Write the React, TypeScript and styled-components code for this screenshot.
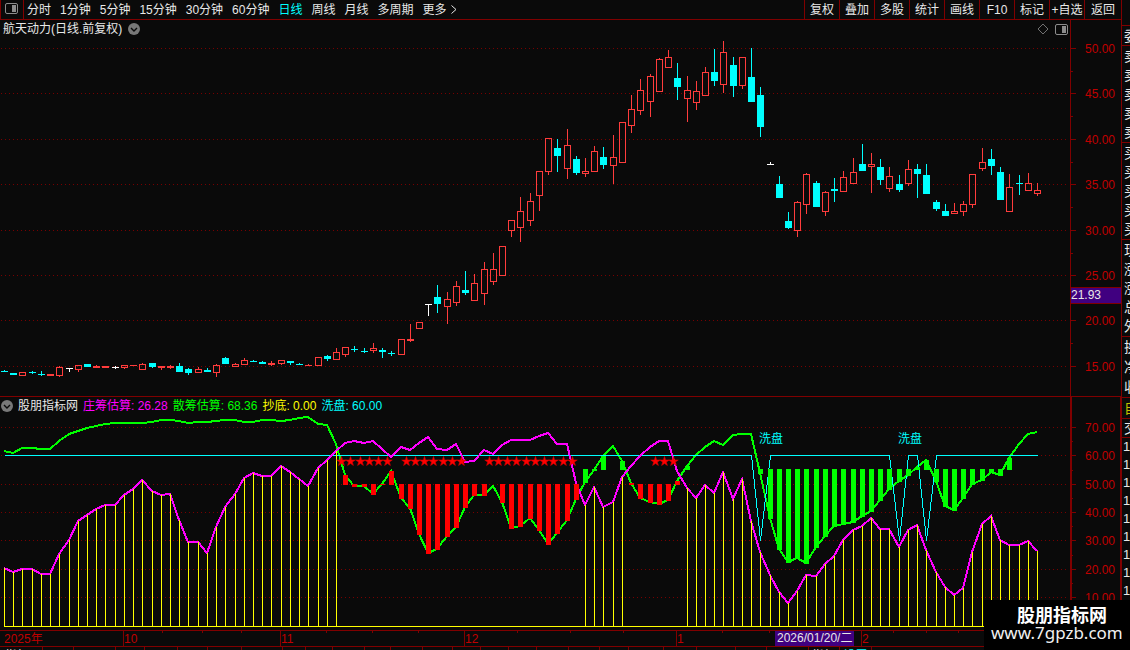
import React from "react";
import styled, { createGlobalStyle } from "styled-components";

const FRAME = "#800000";
const AXIS_TEXT = "#c00000";
const RISE = "#ff3c3c";
const FALL = "#00ffff";

const GlobalStyle = createGlobalStyle`
  * { box-sizing: border-box; }
  body { margin: 0; background: #0a0a0a; }
  body, button {
    font-family: "Liberation Sans", "Noto Sans CJK SC", sans-serif;
    font-size: 12px;
    line-height: 16px;
  }
`;

const Page = styled.div`
  position: relative;
  display: grid;
  grid-template-columns: minmax(0, 1fr) 9px;
  height: 100vh;
  overflow: hidden;
  color: #e8e8e8;
  background: #0a0a0a;
`;

const Main = styled.main`
  display: flex;
  flex-direction: column;
  min-width: 0;
`;

const Toolbar = styled.nav`
  display: flex;
  align-items: stretch;
  height: 20px;
  border-bottom: 1px solid ${FRAME};
`;

const LayoutButton = styled.button`
  display: flex;
  align-items: center;
  justify-content: center;
  width: 24px;
  padding: 0 2px 2px 0;
  background: none;
  border: solid ${FRAME};
  border-width: 0 1px;
`;

const Periods = styled.div`
  display: flex;
  flex: 1;
  align-items: center;
  gap: 9px;
  padding-left: 3px;
  min-width: 0;
`;

const PeriodButton = styled.button<{ $active?: boolean }>`
  display: flex;
  align-items: center;
  gap: 4px;
  padding: 0;
  border: 0;
  background: none;
  white-space: nowrap;
  color: ${(p) => (p.$active ? FALL : "#e8e8e8")};
`;

const ActionButton = styled.button<{ $width: number }>`
  width: ${(p) => p.$width}px;
  padding: 0;
  border: 0;
  border-left: 1px solid ${FRAME};
  background: none;
  color: #e8e8e8;
  text-align: center;
  white-space: nowrap;
`;

const TitleRow = styled.header`
  display: flex;
  height: 20px;
`;

const TitleArea = styled.div`
  display: flex;
  flex: 1;
  align-items: center;
  gap: 6px;
  padding: 0 2px 2px 3px;
`;

const Title = styled.h1`
  margin: 0;
  font-size: 12px;
  font-weight: 400;
`;

const IconButton = styled.button<{ $push?: boolean }>`
  display: flex;
  padding: 0;
  border: 0;
  background: none;
  margin-left: ${(p) => (p.$push ? "auto" : "0")};
`;

const AxisGutter = styled.div<{ $weight: number }>`
  width: 51px;
  border: solid ${FRAME};
  border-width: 0 ${(p) => p.$weight - 1}px 0 ${(p) => p.$weight}px;
`;

const LegendRow = styled.div`
  display: flex;
  height: 19px;
  border-top: 1px solid ${FRAME};
`;

const LegendArea = styled.div`
  display: flex;
  flex: 1;
  align-items: center;
  gap: 5px;
  padding: 0 1px 1px;
`;

const LegendItem = styled.span<{ $color: string }>`
  color: ${(p) => p.$color};
  white-space: nowrap;
`;

const Plot = styled.svg`
  display: block;
  width: 100%;
  height: auto;
  flex: none;
  font-family: "Liberation Sans", "Noto Sans CJK SC", sans-serif;
  font-size: 12px;
`;

const Tabs = styled.div`
  display: flex;
  flex: none;
  height: 18px;
  overflow: hidden;
`;

const Tab = styled.button<{ $width: number; $lit?: boolean }>`
  flex: none;
  width: ${(p) => p.$width}px;
  padding: 0;
  border: 0;
  border-right: 1px solid ${FRAME};
  background: none;
  color: ${(p) => (p.$lit ? FALL : "#e8e8e8")};
  white-space: nowrap;
`;

const Side = styled.aside`
  display: flex;
  flex-direction: column;
  overflow: hidden;
  border-left: 1px solid ${FRAME};
  font-size: 14px;
`;

const SideGroup = styled.div<{ $height: number; $color?: string }>`
  display: flex;
  flex: none;
  flex-direction: column;
  justify-content: space-around;
  height: ${(p) => p.$height}px;
  padding-left: 2px;
  border-bottom: 1px solid ${FRAME};
  color: ${(p) => p.$color || "#e8e8e8"};
  white-space: nowrap;
`;

const Ticks = styled.div`
  display: flex;
  flex-direction: column;
  font-size: 13px;
  line-height: 18px;
  padding-left: 1px;
`;

const Watermark = styled.footer`
  position: absolute;
  right: 0;
  bottom: 0;
  width: 146px;
  height: 50px;
  padding: 4px 0 0 7px;
  background: #000;
  color: #fff;
`;

const SiteName = styled.div`
  padding-left: 3px;
  text-align: center;
  font: 700 18px/20px "Noto Sans CJK SC", sans-serif;
`;

const SiteLink = styled.a`
  display: block;
  font: 400 17px/18px "Noto Sans", sans-serif;
  color: #f0f0f0;
  text-decoration: none;
`;

type Candle = [kind: "r" | "c" | "w", high: number, top: number, bottom: number, low: number];

const candles: Candle[] = [
  ["c", 370, 371, 372, 372], ["c", 373, 373, 375, 375], ["r", 372, 372, 376, 376], ["c", 371, 372, 373, 374],
  ["c", 371, 374, 375, 376], ["r", 374, 374, 376, 376], ["r", 366, 367, 376, 377], ["w", 368, 368, 369, 372],
  ["r", 365, 365, 370, 372], ["c", 364, 364, 367, 367], ["r", 365, 366, 368, 368], ["r", 366, 366, 368, 368],
  ["w", 366, 367, 368, 369], ["r", 365, 365, 368, 369], ["r", 365, 365, 366, 366], ["r", 363, 364, 370, 370],
  ["c", 363, 363, 367, 368], ["r", 366, 366, 368, 370], ["r", 365, 366, 368, 369], ["c", 363, 366, 372, 372],
  ["c", 368, 369, 373, 375], ["r", 367, 369, 373, 373], ["c", 368, 370, 372, 372], ["r", 364, 365, 373, 377],
  ["c", 357, 358, 364, 364], ["r", 363, 364, 367, 367], ["r", 358, 360, 365, 365], ["c", 360, 361, 362, 362],
  ["c", 361, 362, 364, 364], ["r", 361, 363, 365, 366], ["r", 360, 360, 364, 365], ["c", 361, 361, 363, 365],
  ["c", 363, 364, 365, 365], ["r", 364, 365, 366, 366], ["r", 357, 357, 366, 366], ["c", 355, 356, 359, 361],
  ["r", 348, 352, 360, 360], ["r", 347, 347, 355, 357], ["c", 346, 349, 350, 352], ["c", 348, 351, 352, 353],
  ["r", 343, 348, 351, 353], ["c", 348, 350, 352, 358], ["c", 351, 353, 354, 356], ["r", 339, 339, 355, 355],
  ["r", 324, 339, 341, 342], ["r", 322, 322, 329, 329], ["w", 304, 304, 305, 316], ["c", 285, 297, 304, 313],
  ["r", 292, 299, 307, 324], ["r", 281, 286, 303, 306], ["c", 271, 290, 293, 295], ["r", 274, 283, 301, 301],
  ["r", 262, 269, 294, 305], ["r", 253, 269, 282, 285], ["r", 246, 246, 276, 276], ["r", 220, 220, 231, 237],
  ["r", 197, 211, 228, 242], ["r", 193, 201, 221, 226], ["r", 171, 171, 196, 211], ["r", 138, 138, 172, 175],
  ["c", 139, 148, 156, 172], ["r", 129, 145, 169, 179], ["c", 156, 159, 173, 175], ["r", 158, 171, 174, 177],
  ["r", 146, 151, 172, 172], ["c", 147, 157, 165, 169], ["r", 135, 157, 166, 184], ["r", 122, 122, 163, 163],
  ["r", 95, 109, 126, 133], ["r", 79, 90, 111, 115], ["r", 74, 76, 102, 117], ["r", 58, 59, 92, 92],
  ["r", 50, 57, 68, 68], ["c", 63, 78, 87, 100], ["r", 76, 90, 99, 122], ["r", 81, 91, 103, 110],
  ["r", 67, 72, 96, 96], ["c", 49, 72, 81, 86], ["r", 41, 52, 85, 93], ["c", 57, 65, 86, 97],
  ["r", 57, 57, 86, 89], ["c", 48, 77, 102, 102], ["c", 87, 95, 127, 137], ["w", 162, 164, 165, 165],
  ["c", 176, 184, 198, 198], ["c", 212, 221, 228, 229], ["r", 201, 202, 231, 237], ["r", 173, 174, 205, 214],
  ["c", 181, 183, 207, 207], ["r", 191, 192, 212, 216], ["c", 178, 189, 191, 202], ["r", 171, 177, 192, 192],
  ["r", 158, 172, 184, 184], ["c", 144, 164, 171, 171], ["r", 153, 164, 167, 193], ["c", 159, 167, 180, 185],
  ["r", 167, 176, 189, 192], ["c", 175, 184, 190, 192], ["r", 160, 169, 184, 186], ["c", 164, 169, 174, 198],
  ["c", 164, 175, 194, 194], ["c", 200, 202, 209, 211], ["c", 204, 211, 216, 216], ["r", 203, 211, 214, 214],
  ["r", 201, 204, 212, 216], ["r", 174, 174, 205, 208], ["r", 148, 162, 169, 171], ["c", 149, 159, 166, 175],
  ["c", 167, 172, 200, 200], ["r", 174, 187, 212, 212], ["c", 175, 183, 184, 195], ["r", 173, 183, 191, 191],
  ["r", 183, 190, 194, 196],
];

const mainChips = [
  568, 572, 569, 569, 574, 574, 554, 540, 521, 515, 509, 505, 505, 495, 489, 480, 491, 495, 494, 520,
  542, 542, 553, 527, 507, 494, 478, 473, 476, 476, 466, 472, 479, 486, 468, 460, 451, 443, 441, 443,
  441, 449, 457, 447, 450, 443, 437, 449, 450, 444, 462, 461, 450, 454, 445, 440, 440, 440, 436, 433,
  444, 444, 483, 505, 487, 507, 502, 477, 466, 456, 447, 441, 441, 471, 488, 498, 485, 493, 472, 499,
  479, 521, 552, 575, 592, 603, 591, 575, 576, 564, 556, 540, 530, 526, 518, 529, 529, 547, 530, 525,
  550, 572, 587, 595, 588, 552, 524, 516, 540, 545, 545, 541, 551,
];

const retailChips = [
  451, 453, 448, 448, 449, 449, 441, 434, 431, 428, 426, 424, 423, 423, 423, 423, 422, 420, 420, 421,
  423, 422, 422, 421, 420, 420, 422, 422, 420, 420, 421, 420, 418, 417, 424, 425, 444, 475, 486, 486,
  494, 484, 471, 498, 508, 534, 553, 549, 536, 527, 507, 495, 495, 486, 502, 528, 526, 518, 530, 544,
  533, 520, 499, 482, 470, 456, 446, 461, 483, 498, 502, 504, 500, 481, 466, 455, 447, 441, 445, 435,
  434, 434, 473, 518, 549, 562, 558, 563, 547, 536, 526, 524, 522, 516, 511, 500, 489, 481, 475, 467,
  460, 481, 506, 510, 498, 484, 480, 472, 475, 458, 444, 434, 432,
];

const xAt = (i: number) => Math.round(4 + i * 9.223);
const toPoints = (ys: number[]) => ys.map((y, i) => `${xAt(i)},${y}`).join(" ");
const between = (i: number, a: number, b: number) => i >= a && i <= b;

const isRedZone = (i: number) => between(i, 37, 62) || between(i, 68, 73);
const hasStar = (i: number) =>
  between(i, 37, 42) || between(i, 44, 50) || between(i, 53, 62) || between(i, 71, 73);

const washLine = mainChips.map((_, i) => (i === 82 || i === 97 || i === 100 ? 540 : 455));

const starPoints = (cx: number, cy: number) =>
  Array.from({ length: 10 }, (_, k) => {
    const r = k % 2 ? 2 : 5;
    const a = -Math.PI / 2 + (k * Math.PI) / 5;
    return `${(cx + r * Math.cos(a)).toFixed(1)},${(cy + r * Math.sin(a)).toFixed(1)}`;
  }).join(" ");

const priceLevels: [string, number][] = [
  ["50.00", 48], ["45.00", 93], ["40.00", 139], ["35.00", 184],
  ["30.00", 230], ["25.00", 275], ["20.00", 320], ["15.00", 366],
];
const priceMinor = [71, 116, 162, 207, 253, 343];

const chipLevels: [string, number][] = [
  ["70.00", 427], ["60.00", 455], ["50.00", 484], ["40.00", 512],
  ["30.00", 540], ["20.00", 569], ["10.00", 597],
];
const chipMinor = [441, 470, 498, 526, 555, 583];

const months: [string, number][] = [["10", 123], ["11", 280], ["12", 464], ["1", 676], ["2", 861]];
const weekTicks = [162, 202, 241, 326, 372, 418, 517, 570, 623, 722, 769, 893, 926, 958];

const periods = ["分时", "1分钟", "5分钟", "15分钟", "30分钟", "60分钟", "日线", "周线", "月线", "多周期"];
const actions = ["复权", "叠加", "多股", "统计", "画线", "F10", "标记", "+自选", "返回"];
const tabEdges = [
  42, 73, 115, 144, 177, 207, 241, 282, 305, 332, 364, 390, 422, 452, 480, 508,
  536, 568, 599, 628, 663, 696, 735, 766, 808, 839, 871,
];
const tabNames: Record<number, string> = { 0: "指标A", 25: "指标", 26: "设置" };

const sideGroups: { height: number; rows: string[]; color?: string }[] = [
  { height: 26, rows: [] },
  { height: 20, rows: ["委"] },
  { height: 97, rows: ["卖", "卖", "卖", "卖", "卖"] },
  { height: 97, rows: ["买", "买", "买", "买", "买"] },
  { height: 97, rows: ["现", "涨", "涨", "总", "外"] },
  { height: 61, rows: ["换", "净", "收"] },
  { height: 21, rows: ["自"], color: "#c0c000" },
  { height: 19, rows: ["交"] },
];

function PanelIcon() {
  return (
    <svg width="13" height="11" viewBox="0 0 13 11">
      <rect x="0.5" y="0.5" width="12" height="10" rx="1.5" fill="none" stroke="#8c8c8c" />
      <rect x="7" y="2" width="4" height="7" fill="#8c8c8c" />
    </svg>
  );
}

function FoldIcon() {
  return (
    <svg width="12" height="12" viewBox="0 0 12 12">
      <circle cx="6" cy="6" r="6" fill="#787878" />
      <path d="M3 5 L6 8 L9 5" fill="none" stroke="#0a0a0a" strokeWidth="1.4" />
    </svg>
  );
}

function Scale({ levels, minor }: { levels: [string, number][]; minor: number[] }) {
  return (
    <g>
      {levels.map(([label, y]) => (
        <g key={label}>
          <line x1="1" x2="1068" y1={y + 0.5} y2={y + 0.5} stroke="#780000" strokeDasharray="1 3" />
          <rect x="1071" y={y} width="5" height="1" fill={FRAME} />
          <text x="1085" y={y + 5} fill={AXIS_TEXT}>{label}</text>
        </g>
      ))}
      {minor.map((y) => (
        <rect key={y} x="1071" y={y} width="2" height="1" fill={FRAME} />
      ))}
    </g>
  );
}

function CandleMark({ candle, x }: { candle: Candle; x: number }) {
  const [kind, high, top, bottom, low] = candle;
  const color = kind === "r" ? RISE : kind === "c" ? FALL : "#ffffff";
  const hollow = kind === "r" && bottom - top > 2;
  return (
    <g fill={color}>
      {top > high && <rect x={x} y={high} width="1" height={top - high} />}
      {low > bottom && <rect x={x} y={bottom} width="1" height={low - bottom} />}
      {hollow ? (
        <rect x={x - 2.5} y={top + 0.5} width="6" height={bottom - top - 1} fill="none" stroke={color} />
      ) : (
        <rect x={x - 3} y={top} width="7" height={bottom - top} />
      )}
    </g>
  );
}

function PriceChart() {
  return (
    <Plot viewBox="0 40 1121 356" shapeRendering="crispEdges" role="img" aria-label="日线">
      <Scale levels={priceLevels} minor={priceMinor} />
      <rect x="1070" y="40" width="1" height="356" fill={FRAME} />
      {candles.map((c, i) => (
        <CandleMark key={i} candle={c} x={xAt(i)} />
      ))}
      <rect x="1071" y="287" width="50" height="17" fill="#400080" />
      <rect x="1071" y="287" width="50" height="1" fill={FRAME} />
      <rect x="1071" y="303" width="50" height="1" fill={FRAME} />
      <text x="1071" y="299" fill="#e8e8e8">21.93</text>
    </Plot>
  );
}

function ChipChart() {
  return (
    <Plot viewBox="0 415 1121 232" shapeRendering="crispEdges" role="img" aria-label="庄筹估算 散筹估算">
      <Scale levels={chipLevels} minor={chipMinor} />
      <rect x="1070" y="415" width="2" height="216" fill={FRAME} />
      <rect x="1120" y="415" width="1" height="216" fill={FRAME} />

      <polyline points={toPoints(retailChips)} fill="none" stroke="#00ff00" strokeWidth="2" />
      <polyline
        points={toPoints(washLine)}
        transform="translate(0.5 0.5)"
        fill="none"
        stroke="#00ffff"
      />
      <polyline points={toPoints(mainChips)} fill="none" stroke="#ff00ff" strokeWidth="2" />

      {mainChips.map((y, i) =>
        isRedZone(i) ? null : (
          <rect key={i} x={xAt(i)} y={y} width="1" height={626 - y} fill="#ffff00" />
        )
      )}
      <rect x="4" y="626" width="1034" height="1" fill="#ffff00" />

      {retailChips.map((y, i) => {
        if (i < 37 || i === 53 || (!isRedZone(i) && y < 456)) return null;
        const base = isRedZone(i) ? 484 : 469;
        const from = Math.min(base, y);
        return (
          <rect
            key={i}
            x={xAt(i) - 2}
            y={from}
            width="5"
            height={Math.max(base, y) - from + 1}
            fill={isRedZone(i) ? "#ff0000" : "#00ff00"}
          />
        );
      })}

      {mainChips.map((_, i) =>
        hasStar(i) ? (
          <polygon
            key={i}
            points={starPoints(xAt(i) - 3.5, 461.5)}
            fill="#ff0000"
            stroke="#d00000"
            strokeWidth="0.6"
            shapeRendering="auto"
          />
        ) : null
      )}
      <text x="759" y="443" fill="#00ffff">洗盘</text>
      <text x="898" y="443" fill="#00ffff">洗盘</text>

      <rect x="0" y="630" width="1121" height="1" fill={FRAME} />
      <rect x="0" y="646" width="1121" height="1" fill={FRAME} />
      {weekTicks.map((x) => (
        <rect key={x} x={x} y="631" width="1" height="2" fill={FRAME} />
      ))}
      <text x="4" y="643" fill={AXIS_TEXT}>2025年</text>
      {months.map(([label, x]) => (
        <g key={label}>
          <rect x={x} y="631" width="1" height="15" fill={FRAME} />
          <text x={x + 1} y="643" fill={AXIS_TEXT}>{label}</text>
        </g>
      ))}
      <rect x="775" y="631" width="79" height="15" fill="#400080" />
      <text x="777" y="642" fill="#e8e8e8">2026/01/20/二</text>
    </Plot>
  );
}

export default function App() {
  return (
    <>
      <GlobalStyle />
      <Page>
        <Main>
          <Toolbar>
            <LayoutButton aria-label="布局"><PanelIcon /></LayoutButton>
            <Periods>
              {periods.map((p) => (
                <PeriodButton key={p} $active={p === "日线"}>{p}</PeriodButton>
              ))}
              <PeriodButton>
                更多
                <svg width="6" height="9" viewBox="0 0 6 9">
                  <path d="M0.5 0.5 L5 4.5 L0.5 8.5" fill="none" stroke="#e8e8e8" />
                </svg>
              </PeriodButton>
            </Periods>
            {actions.map((a) => (
              <ActionButton key={a} $width={a === "返回" ? 37 : 35}>{a}</ActionButton>
            ))}
          </Toolbar>

          <TitleRow>
            <TitleArea>
              <Title>航天动力(日线.前复权)</Title>
              <IconButton aria-label="展开"><FoldIcon /></IconButton>
              <IconButton $push aria-label="标注">
                <svg width="12" height="12" viewBox="0 0 12 12">
                  <path d="M6 1 L11 6 L6 11 L1 6 Z" fill="none" stroke="#8c8c8c" strokeWidth="0.8" />
                </svg>
              </IconButton>
              <IconButton aria-label="侧栏"><PanelIcon /></IconButton>
            </TitleArea>
            <AxisGutter $weight={1} />
          </TitleRow>

          <PriceChart />

          <LegendRow>
            <LegendArea>
              <IconButton aria-label="指标菜单"><FoldIcon /></IconButton>
              <LegendItem $color="#e8e8e8">股朋指标网</LegendItem>
              <LegendItem $color="#ff00ff">庄筹估算: 26.28</LegendItem>
              <LegendItem $color="#00ff00">散筹估算: 68.36</LegendItem>
              <LegendItem $color="#ffff00">抄底: 0.00</LegendItem>
              <LegendItem $color="#00ffff">洗盘: 60.00</LegendItem>
            </LegendArea>
            <AxisGutter $weight={2} />
          </LegendRow>

          <ChipChart />

          <Tabs>
            {tabEdges.map((edge, i) => (
              <Tab key={edge} $width={edge - (i ? tabEdges[i - 1] : -1)} $lit={i === 26}>
                {tabNames[i]}
              </Tab>
            ))}
          </Tabs>
        </Main>

        <Side>
          {sideGroups.map((g, i) => (
            <SideGroup key={i} $height={g.height} $color={g.color}>
              {g.rows.map((r, k) => (
                <span key={k}>{r}</span>
              ))}
            </SideGroup>
          ))}
          <Ticks>
            {Array.from({ length: 9 }, (_, k) => (
              <span key={k}>1</span>
            ))}
          </Ticks>
        </Side>

        <Watermark>
          <SiteName>股朋指标网</SiteName>
          <SiteLink href="#">www.7gpzb.com</SiteLink>
        </Watermark>
      </Page>
    </>
  );
}
